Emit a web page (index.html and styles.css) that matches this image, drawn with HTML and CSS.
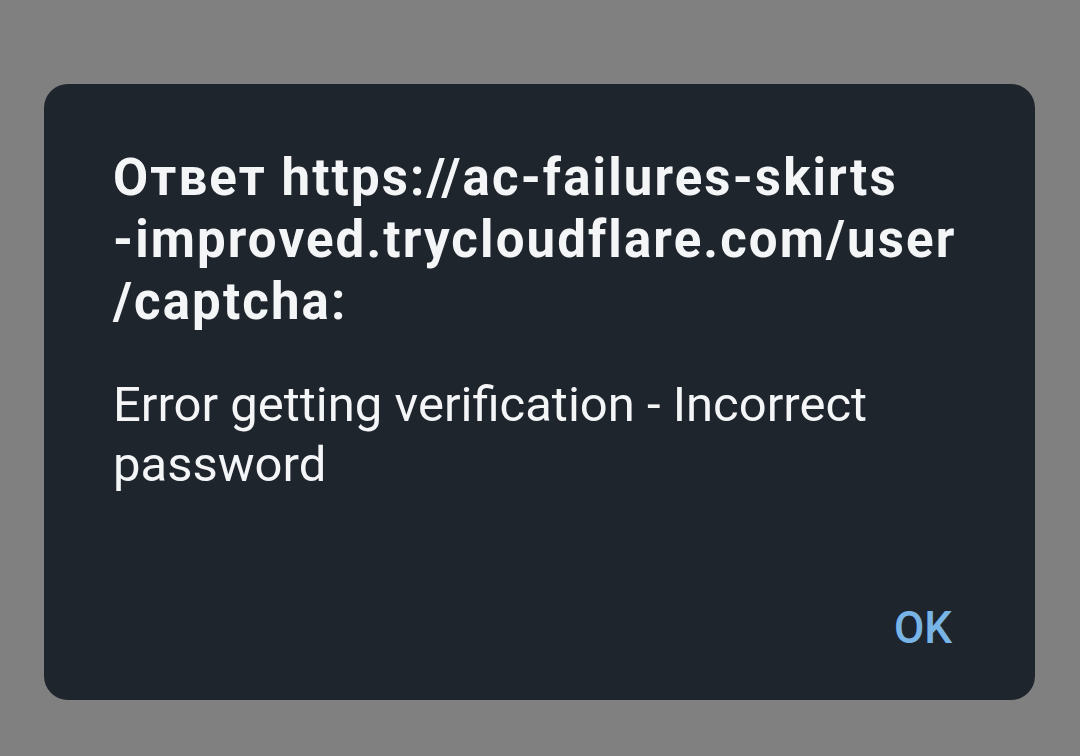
FILE: index.html
```html
<!DOCTYPE html>
<html>
<head>
<meta charset="utf-8">
<link rel="stylesheet" href="styles.css">
</head>
<body>
<div class="dialog">
  <div class="title">Ответ https://ac-failures-skirts<br>-improved.trycloudflare.com/user<br>/captcha:</div>
  <div class="message">Error getting verification - Incorrect<br>password</div>
  <div class="actions"><span class="ok">OK</span></div>
</div>
</body>
</html>
```
FILE: styles.css
```css
html, body {
  margin: 0;
  padding: 0;
  background: #808080;
  width: 1080px;
  height: 756px;
  overflow: hidden;
}
body {
  padding: 84px 0 0 44px;
  box-sizing: border-box;
}
.dialog {
  width: 991px;
  height: 616px;
  background: #1f252d;
  border-radius: 24px;
  box-sizing: border-box;
  padding: 63px 69px 0 69px;
  display: flex;
  flex-direction: column;
}
.title {
  font-family: Roboto, "Liberation Sans", sans-serif;
  font-weight: 700;
  font-size: 51px;
  line-height: 62px;
  letter-spacing: 2.1px;
  color: #f4f5f7;
  white-space: nowrap;
}
.message {
  margin-top: 42px;
  font-family: Roboto, "Liberation Sans", sans-serif;
  font-size: 49px;
  line-height: 60px;
  color: #f4f5f7;
  white-space: nowrap;
}
.actions {
  margin-top: auto;
  display: flex;
  justify-content: flex-end;
  padding: 0 14px 47px 0;
}
.ok {
  font-family: Roboto, "Liberation Sans", sans-serif;
  font-weight: 500;
  font-size: 44px;
  line-height: 50px;
  color: #78b4e6;
}
```
